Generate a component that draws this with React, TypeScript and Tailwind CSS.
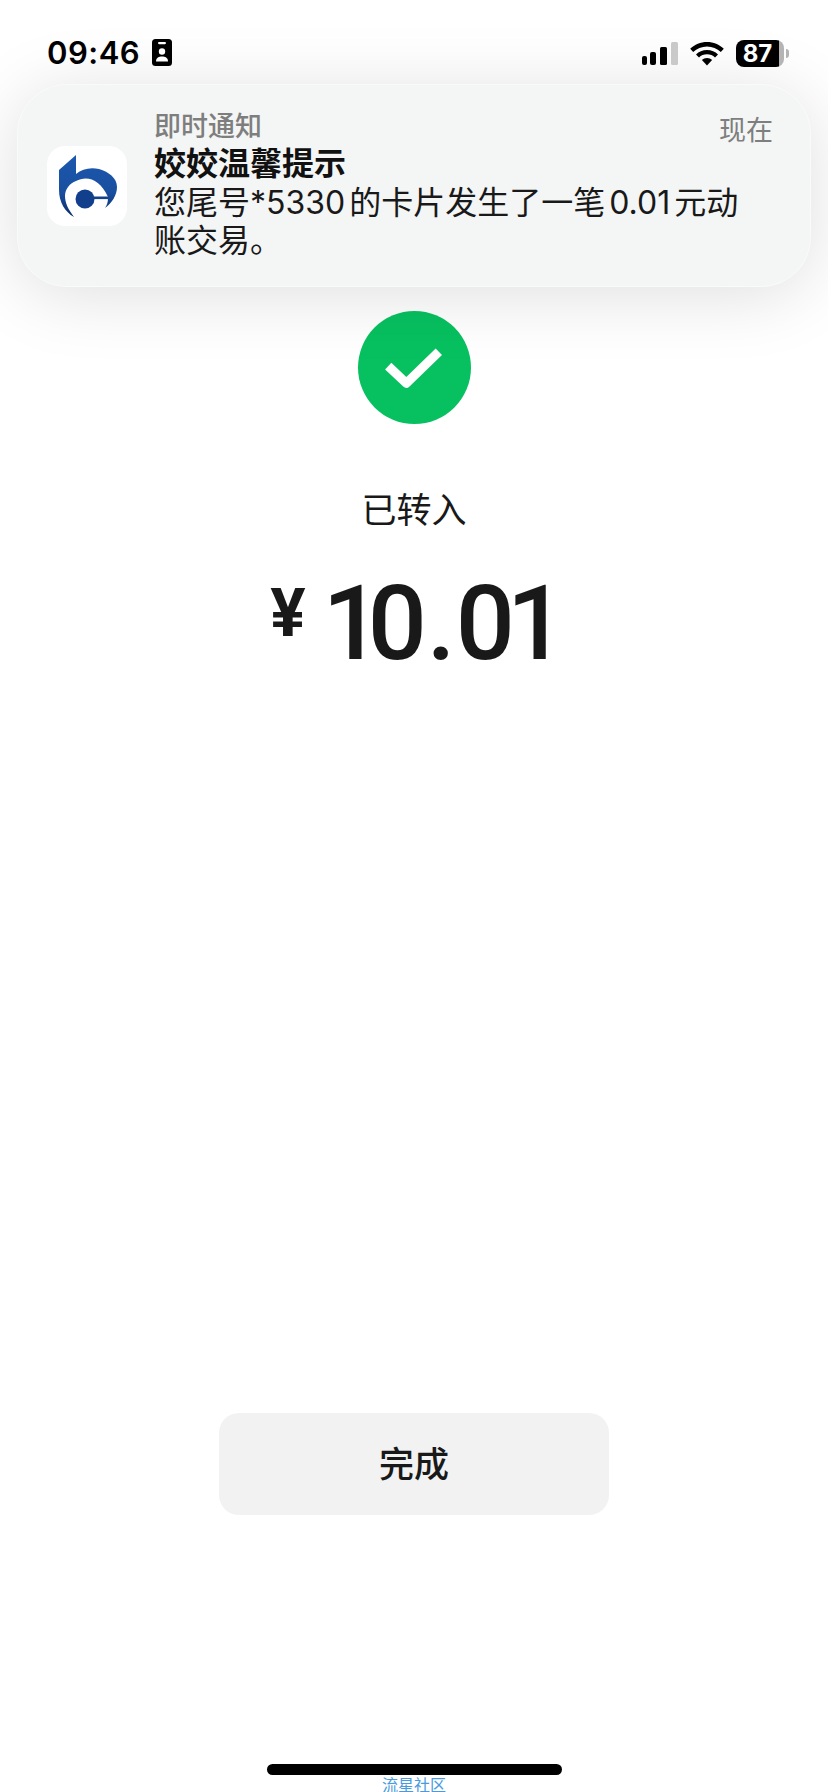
const FONT = "font-['Inter','Noto_Sans_CJK_SC',sans-serif]"

// bank logo, drawn on an 80x80 box
function BankLogo() {
  return (
    <svg viewBox="0 0 80 80" className="h-full w-full">
      <defs>
        <linearGradient id="logoBlue" x1="0" y1="0" x2="0" y2="1">
          <stop offset="0" stopColor="#1b58ae" />
          <stop offset="0.6" stopColor="#1a4f9f" />
          <stop offset="1" stopColor="#0d2c6c" />
        </linearGradient>
      </defs>
      <path
        d="M29 9 L12 24 L12 44 C12 56 18 66 27 71 C21 63 18 57 18 50 C18 43 23 37 29 35 C40 29 53 33 61 51 L61 52 C61 56 60 59 58 62 C65 57 70 49 70 41 C70 32 62 26 52 23 C43 21 35 23 29 28 Z"
        fill="url(#logoBlue)"
      />
      <rect x="40" y="50.5" width="21" height="2.6" fill="#14418c" />
      <circle cx="38" cy="53" r="9.5" fill="#123f8b" />
    </svg>
  )
}

function IdBadge() {
  return (
    <svg viewBox="0 0 20 27" className="ml-[12px] h-[27px] w-[20px]">
      <rect width="20" height="27" rx="3.5" fill="#000" />
      <rect x="6" y="3" width="8" height="2.2" rx="1.1" fill="#fff" />
      <circle cx="10" cy="12.5" r="3.2" fill="#fff" />
      <path d="M4 22.5 C4 18.5 7 17.5 10 17.5 C13 17.5 16 18.5 16 22.5 Z" fill="#fff" />
    </svg>
  )
}

function Signal() {
  return (
    <svg viewBox="0 0 36 24" className="h-[24px] w-[36px]">
      <rect x="0" y="14" width="5" height="9" rx="2" fill="#000" />
      <rect x="8" y="10" width="6" height="13" rx="2" fill="#000" />
      <rect x="18" y="5" width="7" height="18" rx="1.5" fill="#000" />
      <rect x="29" y="0" width="7" height="23" rx="1.5" fill="#c9c9c9" />
    </svg>
  )
}

function Wifi() {
  return (
    <svg viewBox="0 0 34 24" className="ml-[12px] h-[24px] w-[34px]">
      <path
        d="M17 0 C23.5 0 29.4 2.6 33.8 6.8 L30.8 9.9 C27.2 6.5 22.3 4.4 17 4.4 C11.7 4.4 6.8 6.5 3.2 9.9 L0.2 6.8 C4.6 2.6 10.5 0 17 0 Z"
        fill="#000"
      />
      <path
        d="M17 8 C21.3 8 25.2 9.7 28 12.4 L25 15.5 C23 13.5 20.1 12.3 17 12.3 C13.9 12.3 11 13.5 9 15.5 L6 12.4 C8.8 9.7 12.7 8 17 8 Z"
        fill="#000"
      />
      <path d="M17 16 C19 16 20.8 16.8 22.1 18.1 L17 23.6 L11.9 18.1 C13.2 16.8 15 16 17 16 Z" fill="#000" />
    </svg>
  )
}

function Battery() {
  return (
    <div className="ml-[12px] flex items-center">
      <div className="flex h-[27px] w-[48px] overflow-hidden rounded-[8px]">
        <div className="flex w-[43px] items-center justify-center bg-black text-[24px] leading-none font-bold text-white">
          87
        </div>
        <div className="flex-1 bg-[#b4b4b4]" />
      </div>
      <div className="ml-[2px] h-[9px] w-[3px] rounded-r-full bg-[#b4b4b4]" />
    </div>
  )
}

export default function App() {
  return (
    <div className={`relative h-[1792px] w-[828px] overflow-hidden bg-white text-[#191919] ${FONT}`}>
      <main className="flex h-full flex-col items-center pt-[311px]">
        <div className="flex h-[113px] w-[113px] items-center justify-center rounded-full bg-[#07c160]">
          <svg viewBox="0 0 60 44" className="h-[42px] w-[58px]">
            <path d="M3 20 L22 38 L56 5" fill="none" stroke="#fff" strokeWidth="9.5" strokeLinejoin="round" />
          </svg>
        </div>
        <p className="mt-[62px] text-[35px] leading-[48px]">已转入</p>
        <div className="mt-[30px] ml-[8px] flex items-start font-['Roboto',sans-serif] font-medium">
          <span className="mt-[16px] mr-[17px] text-[66px] leading-[68px] font-bold">¥</span>
          <span className="text-[104px] leading-[120px]">
            <span className="tracking-[-14px]">1</span>0.<span className="tracking-[-8px]">0</span>1
          </span>
        </div>
        <div className="flex-1" />
        <button className="mb-[249px] h-[102px] w-[390px] rounded-[20px] bg-[#f2f2f2] text-[35px] font-medium">
          完成
        </button>
        <div className="h-[11px] w-[295px] rounded-full bg-black" />
        <div className="mt-[2px] h-[15px] text-[16px] leading-[16px] text-[#4a9ade]">流星社区</div>
      </main>

      {/* status bar and notification lie over the page */}
      <div className="absolute inset-x-0 top-0 px-[17px]">
        <div className="flex h-[84px] items-start pt-[39px] pr-[22px] pl-[30px]">
          <div className="flex items-center">
            <span className="text-[31px] leading-[27px] font-semibold tracking-[0.5px] text-black">09:46</span>
            <IdBadge />
          </div>
          <div className="ml-auto flex items-center pt-[1px]">
            <Signal />
            <Wifi />
            <Battery />
          </div>
        </div>
        <div className="flex h-[203px] items-center rounded-[50px] border border-white/50 bg-[#f4f5f5] pr-[37px] pb-[2px] pl-[29px] shadow-[0_8px_70px_rgba(0,0,0,0.13)]">
          <div className="mt-[2px] h-[80px] w-[80px] shrink-0 rounded-[18px] bg-white">
            <BankLogo />
          </div>
          <div className="ml-[27px] flex-1">
            <div className="flex items-start justify-between">
              <span className="text-[27px] leading-[34px] font-medium text-[#7e7e7e]">即时通知</span>
              <span className="mt-[4px] text-[27px] leading-[34px] text-[#7e7e7e]">现在</span>
            </div>
            <div className="text-[32px] leading-[32px] font-bold text-[#111]">姣姣温馨提示</div>
            <div className="mt-[4px] text-[32px] leading-[38px]">
              您尾号*5330<span className="ml-[4px]">的卡片发生了一笔</span>
              <span className="ml-[4px]">0.01</span>
              <span className="ml-[4px]">元动</span>
              <br />
              账交易。
            </div>
          </div>
        </div>
      </div>
    </div>
  )
}
